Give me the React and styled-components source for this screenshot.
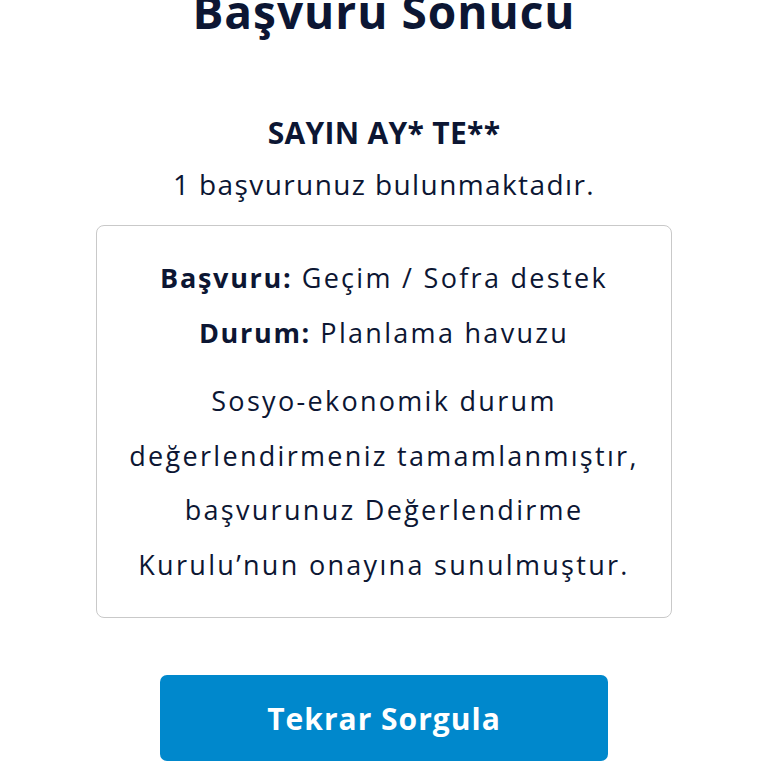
import React from 'react'
import styled, { createGlobalStyle } from 'styled-components'

const GlobalStyle = createGlobalStyle`
  body {
    margin:      0;
    background:  #ffffff;
    font-family: "Open Sans", "Noto Sans", sans-serif;
    color:       #0c1633;
  }
`

const Page = styled.main`
  width:          576px;
  margin:         -17px auto 0;
  display:        flex;
  flex-direction: column;
  align-items:    center;
  text-align:     center;
`

const Title = styled.h1`
  margin:         0;
  font-size:      46px;
  line-height:    56px;
  font-weight:    700;
  letter-spacing: 1px;
`

const Greeting = styled.h2`
  margin:         74px 0 0;
  font-size:      30px;
  line-height:    40px;
  font-weight:    700;
  letter-spacing: 0.3px;
`

const Count = styled.p`
  margin:         11px 0 0;
  font-size:      28px;
  line-height:    40px;
  font-weight:    400;
  letter-spacing: 1.4px;
`

const Card = styled.section`
  box-sizing:     border-box;
  width:          100%;
  margin-top:     21px;
  padding:        25px 0 25px;
  border:         1px solid #c9c9c9;
  border-radius:  8px;
  font-size:      27px;
  line-height:    54.5px;
  letter-spacing: 2.3px;
  white-space:    nowrap;
`

const Row = styled.div`
  b {
    font-weight:    700;
    letter-spacing: 1.7px;
  }
`

const Message = styled.p`
  margin:         14px 0 0;
`

const Button = styled.button`
  width:          448px;
  height:         86px;
  margin-top:     57px;
  border:         none;
  border-radius:  7px;
  background:     #0088cc;
  color:          #ffffff;
  font-family:    inherit;
  font-size:      30px;
  font-weight:    700;
  letter-spacing: 1px;
  cursor:         pointer;
`

const App = () => {
  return (
    <>
      <GlobalStyle />
      <Page>
        <Title>Başvuru Sonucu</Title>
        <Greeting>SAYIN AY* TE**</Greeting>
        <Count>1 başvurunuz bulunmaktadır.</Count>
        <Card>
          <Row><b>Başvuru:</b> Geçim / Sofra destek</Row>
          <Row><b>Durum:</b> Planlama havuzu</Row>
          <Message>
            Sosyo-ekonomik durum<br />
            değerlendirmeniz tamamlanmıştır,<br />
            başvurunuz Değerlendirme<br />
            Kurulu’nun onayına sunulmuştur.
          </Message>
        </Card>
        <Button>Tekrar Sorgula</Button>
      </Page>
    </>
  )
}

export default App
